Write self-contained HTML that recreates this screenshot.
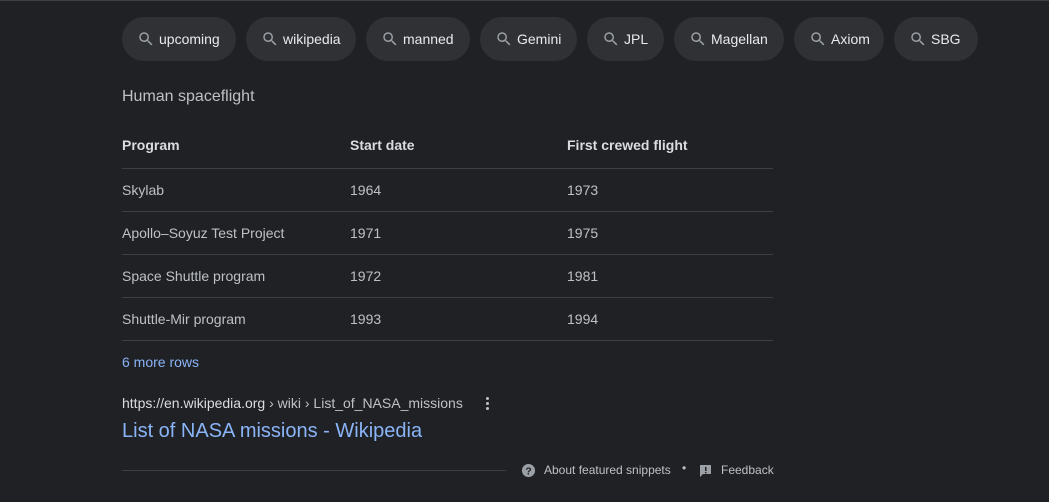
<!DOCTYPE html><html><head><style>
body{margin:0;width:1049px;height:502px;background:#202124;font-family:"Liberation Sans",Arial,sans-serif;color:#bdc1c6;position:relative;overflow:hidden}
.chip{position:absolute;top:17px;height:44px;border-radius:22px;background:#303134;color:#e8eaed;font-size:14px;line-height:44px;box-sizing:border-box;padding-left:37px}
.chip svg{position:absolute;left:15px;top:13px}
.t{position:absolute;font-size:14px;color:#bdc1c6}
.h{font-weight:bold;color:#dadce0}
.ln{position:absolute;left:122px;width:651px;height:1px;background:#3c4043}
</style></head><body>
<div style="position:absolute;left:0;top:0;width:1049px;height:1px;background:#3c4043"></div>
<div class="chip" style="left:122px;width:114px"><svg width="18" height="18" viewBox="0 0 24 24"><path fill="#9aa0a6" d="M15.5 14h-.79l-.28-.27A6.47 6.47 0 0016 9.5 6.5 6.5 0 109.5 16c1.61 0 3.09-.59 4.23-1.57l.27.28v.79l5 4.99L20.49 19l-4.99-5zm-6 0C7.01 14 5 11.99 5 9.5S7.01 5 9.5 5 14 7.01 14 9.5 11.99 14 9.5 14z"/></svg>upcoming</div>
<div class="chip" style="left:246px;width:110px"><svg width="18" height="18" viewBox="0 0 24 24"><path fill="#9aa0a6" d="M15.5 14h-.79l-.28-.27A6.47 6.47 0 0016 9.5 6.5 6.5 0 109.5 16c1.61 0 3.09-.59 4.23-1.57l.27.28v.79l5 4.99L20.49 19l-4.99-5zm-6 0C7.01 14 5 11.99 5 9.5S7.01 5 9.5 5 14 7.01 14 9.5 11.99 14 9.5 14z"/></svg>wikipedia</div>
<div class="chip" style="left:366px;width:104px"><svg width="18" height="18" viewBox="0 0 24 24"><path fill="#9aa0a6" d="M15.5 14h-.79l-.28-.27A6.47 6.47 0 0016 9.5 6.5 6.5 0 109.5 16c1.61 0 3.09-.59 4.23-1.57l.27.28v.79l5 4.99L20.49 19l-4.99-5zm-6 0C7.01 14 5 11.99 5 9.5S7.01 5 9.5 5 14 7.01 14 9.5 11.99 14 9.5 14z"/></svg>manned</div>
<div class="chip" style="left:480px;width:97px"><svg width="18" height="18" viewBox="0 0 24 24"><path fill="#9aa0a6" d="M15.5 14h-.79l-.28-.27A6.47 6.47 0 0016 9.5 6.5 6.5 0 109.5 16c1.61 0 3.09-.59 4.23-1.57l.27.28v.79l5 4.99L20.49 19l-4.99-5zm-6 0C7.01 14 5 11.99 5 9.5S7.01 5 9.5 5 14 7.01 14 9.5 11.99 14 9.5 14z"/></svg>Gemini</div>
<div class="chip" style="left:587px;width:77px"><svg width="18" height="18" viewBox="0 0 24 24"><path fill="#9aa0a6" d="M15.5 14h-.79l-.28-.27A6.47 6.47 0 0016 9.5 6.5 6.5 0 109.5 16c1.61 0 3.09-.59 4.23-1.57l.27.28v.79l5 4.99L20.49 19l-4.99-5zm-6 0C7.01 14 5 11.99 5 9.5S7.01 5 9.5 5 14 7.01 14 9.5 11.99 14 9.5 14z"/></svg>JPL</div>
<div class="chip" style="left:674px;width:110px"><svg width="18" height="18" viewBox="0 0 24 24"><path fill="#9aa0a6" d="M15.5 14h-.79l-.28-.27A6.47 6.47 0 0016 9.5 6.5 6.5 0 109.5 16c1.61 0 3.09-.59 4.23-1.57l.27.28v.79l5 4.99L20.49 19l-4.99-5zm-6 0C7.01 14 5 11.99 5 9.5S7.01 5 9.5 5 14 7.01 14 9.5 11.99 14 9.5 14z"/></svg>Magellan</div>
<div class="chip" style="left:794px;width:90px"><svg width="18" height="18" viewBox="0 0 24 24"><path fill="#9aa0a6" d="M15.5 14h-.79l-.28-.27A6.47 6.47 0 0016 9.5 6.5 6.5 0 109.5 16c1.61 0 3.09-.59 4.23-1.57l.27.28v.79l5 4.99L20.49 19l-4.99-5zm-6 0C7.01 14 5 11.99 5 9.5S7.01 5 9.5 5 14 7.01 14 9.5 11.99 14 9.5 14z"/></svg>Axiom</div>
<div class="chip" style="left:894px;width:84px"><svg width="18" height="18" viewBox="0 0 24 24"><path fill="#9aa0a6" d="M15.5 14h-.79l-.28-.27A6.47 6.47 0 0016 9.5 6.5 6.5 0 109.5 16c1.61 0 3.09-.59 4.23-1.57l.27.28v.79l5 4.99L20.49 19l-4.99-5zm-6 0C7.01 14 5 11.99 5 9.5S7.01 5 9.5 5 14 7.01 14 9.5 11.99 14 9.5 14z"/></svg>SBG</div>

<div class="t" style="left:122px;top:88px;font-size:16px">Human spaceflight</div>
<div class="t h" style="left:122px;top:137px">Program</div><div class="t h" style="left:350px;top:137px">Start date</div><div class="t h" style="left:567px;top:137px">First crewed flight</div>
<div class="ln" style="top:168px"></div>
<div class="t" style="left:122px;top:182px">Skylab</div><div class="t" style="left:350px;top:182px">1964</div><div class="t" style="left:567px;top:182px">1973</div>
<div class="ln" style="top:211px"></div>
<div class="t" style="left:122px;top:225px">Apollo–Soyuz Test Project</div><div class="t" style="left:350px;top:225px">1971</div><div class="t" style="left:567px;top:225px">1975</div>
<div class="ln" style="top:254px"></div>
<div class="t" style="left:122px;top:268px">Space Shuttle program</div><div class="t" style="left:350px;top:268px">1972</div><div class="t" style="left:567px;top:268px">1981</div>
<div class="ln" style="top:297px"></div>
<div class="t" style="left:122px;top:311px">Shuttle-Mir program</div><div class="t" style="left:350px;top:311px">1993</div><div class="t" style="left:567px;top:311px">1994</div>
<div class="ln" style="top:340px"></div>
<div class="t" style="left:122px;top:354px;color:#8ab4f8">6 more rows</div>
<div class="t" style="left:122px;top:395px;color:#dadce0">https://en.wikipedia.org<span style="color:#bdc1c6"> › wiki › List_of_NASA_missions</span></div>
<div style="position:absolute;left:486px;top:397px;width:3px">
<div style="width:3px;height:3px;background:#bdc1c6;border-radius:50%;margin-bottom:2px"></div><div style="width:3px;height:3px;background:#bdc1c6;border-radius:50%;margin-bottom:2px"></div><div style="width:3px;height:3px;background:#bdc1c6;border-radius:50%"></div></div>
<div class="t" style="left:122px;top:420px;font-size:20px;color:#8ab4f8">List of NASA missions - Wikipedia</div>
<div style="position:absolute;left:122px;top:470px;width:384px;height:1px;background:#3c4043"></div>
<svg style="position:absolute;left:521px;top:463px" width="15" height="15" viewBox="0 0 16 16"><circle cx="8" cy="8" r="7" fill="#9aa0a6"/><text x="8" y="12" font-size="11" font-weight="bold" text-anchor="middle" fill="#202124" font-family="Liberation Sans">?</text></svg>
<div class="t" style="left:544px;top:463px;font-size:12px">About featured snippets</div>
<div class="t" style="left:682px;top:461px;font-size:12px">•</div>
<svg style="position:absolute;left:699px;top:464px" width="13" height="13" viewBox="0 0 13 13"><path fill="#9aa0a6" d="M1 1h11v9H4l-3 3z"/><rect x="6" y="3" width="1.5" height="4" fill="#202124"/><rect x="6" y="8" width="1.5" height="1.3" fill="#202124"/></svg>
<div class="t" style="left:721px;top:463px;font-size:12px">Feedback</div>
</body></html>
